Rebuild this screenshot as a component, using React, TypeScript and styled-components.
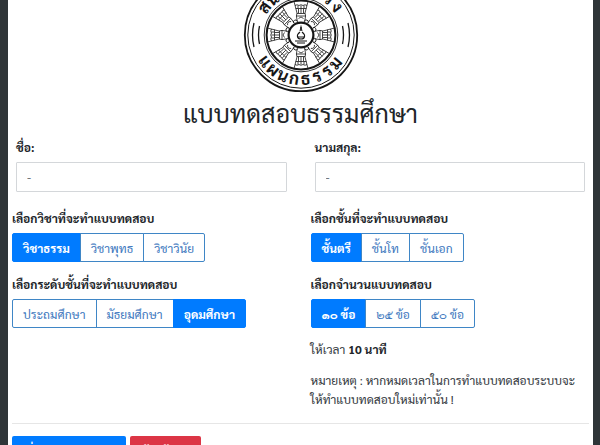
import React, { useState } from "react";
import styled, { createGlobalStyle } from "styled-components";

const Global = createGlobalStyle`
  * { box-sizing: border-box; }
  html, body { margin: 0; height: 100%; overflow: hidden; }
  body {
    background: #2f3538;
    color: #212529;
    font-family: Sarabun, "Noto Sans", sans-serif;
    font-size: 12px;
    line-height: 20px;
  }
  #root { height: 100%; }
  button, input { font: inherit; }
`;

const Page = styled.div`
  min-height: 100%;
  padding: 0 7px 0 8px;
  display: flex;
`;

const Panel = styled.main`
  flex: 1;
  min-width: 0;
  padding: 0 4px;
  background: #fff;
`;

const Header = styled.header`
  display: flex;
  flex-direction: column;
  align-items: center;
`;

const Emblem = styled.svg`
  display: block;
  width: 116px;
  height: 93px;
`;

const Title = styled.h1`
  margin: 4px 0 8px;
  font-size: 25px;
  font-weight: 400;
  line-height: 32px;
`;

const Columns = styled.div`
  display: grid;
  grid-template-columns: 1fr 1fr;
  column-gap: 22px;
  padding-right: 2px;
`;

const Field = styled.div`
  display: flex;
  flex-direction: column;
  gap: 5px;
  padding: 0 2px 0 4px;
`;

const FieldLabel = styled.label`
  font-weight: 700;
`;

const TextBox = styled.input`
  width: 100%;
  height: 30px;
  padding: 0 10px;
  border: 1px solid #d4d7da;
  border-radius: 1px;
  color: #495057;
  background: #fff;
`;

const Group = styled.fieldset`
  min-width: 0;
  margin: 0;
  padding: 0;
  border: 0;
`;

const Legend = styled.legend`
  padding: 0;
  margin-bottom: 5px;
  font-weight: 700;
`;

const Stack = styled.div`
  display: flex;
  flex-direction: column;
  gap: 12px;
  padding-top: 16px;
`;

const Segments = styled.div`
  display: flex;
`;

const Segment = styled.button<{ $active: boolean }>`
  height: 29px;
  padding: 0 10px;
  border: 1px solid ${(p) => (p.$active ? "#007bff" : "#3f86c6")};
  background: ${(p) => (p.$active ? "#007bff" : "#fff")};
  color: ${(p) => (p.$active ? "#fff" : "#4078be")};
  font-weight: ${(p) => (p.$active ? 700 : 400)};
  white-space: nowrap;
  cursor: pointer;
  & + & { margin-left: -1px; }
  &:first-child { border-radius: 2px 0 0 2px; }
  &:last-child { border-radius: 0 2px 2px 0; }
`;

const Note = styled.p`
  margin: 0;
  line-height: 19px;
  color: #34393e;
  strong { color: #212529; }
`;

const Divider = styled.hr`
  margin: 14px 0 12px;
  border: 0;
  border-top: 1px solid #e6e6e6;
`;

const Actions = styled.div`
  display: flex;
  gap: 4px;
`;

const Action = styled.button<{ $tone: string }>`
  height: 30px;
  padding: 0 11px;
  border: 0;
  border-radius: 2px;
  background: ${(p) => p.$tone};
  color: #fff;
  font-weight: 700;
  cursor: pointer;
`;

const topLetters = [..."สนามหลวง"];
const bottomLetters = [..."แผนกธรรม"];
const spokes = [0, 45, 90, 135, 180, 225, 270, 315];

function Logo() {
  return (
    <Emblem viewBox="-58 -35 116 93" role="img" aria-label="สนามหลวง แผนกธรรม">
      <g fill="none" stroke="#161616">
        <circle r="56.2" strokeWidth="1.8" />
        <circle r="53.2" strokeWidth="1" />
        <circle r="36.8" strokeWidth="0.9" />
        <circle r="34.4" strokeWidth="2" />
        {[0, 180].map((a) => (
          <g key={a} transform={`rotate(${a})`} strokeWidth="1.3">
            <path d="M41.500 -9Q43.500 0 41.500 9M47 -12Q50 0 47 12" />
          </g>
        ))}
        {spokes.map((a) => (
          <g key={a} transform={`rotate(${a})`} strokeWidth="0.8">
            <path d="M-3.600 -13L-4.600 -19L-4 -22L-7 -33.600M3.600 -13L4.600 -19L4 -22L7 -33.600" />
            <path d="M-4.600 -19H4.600M-4 -21.500H4M-5.300 -26.500H5.300M-6 -29.500Q-4 -31 -2 -29.500Q0 -31 2 -29.500Q4 -31 6 -29.500" />
            <path d="M-2.500 -22V-26M0 -21.500V-26.500M2.500 -22V-26M-3 -26.500V-29.500M0 -26.500V-29.500M3 -26.500V-29.500" />
            <path d="M-2.500 -16.500Q0 -19.500 2.500 -16.500" />
          </g>
        ))}
        {spokes.map((a) => (
          <path key={a} d="M-2 -14Q-2 -16.500 0 -16Q2 -16.500 2 -14" transform={`rotate(${a + 22})`} strokeWidth="0.8" />
        ))}
        <circle r="12.400" fill="#fff" strokeWidth="2.200" />
        <path d="M0 -9.500V-4M-1 -4L0 -8L1 -4" strokeWidth="0.9" />
        <path d="M-1 -3C-5 0 -4 4 0 4S5 0 1 -3" strokeWidth="1.200" />
        <path d="M-3 2H3M-6 6H6M-4 8H4" strokeWidth="1.200" />
      </g>
      <g fill="#161616" fontSize="17" fontWeight="700" textAnchor="middle">
        {topLetters.map((c, i) => (
          <text key={i} y="-40" transform={`rotate(${-53 + i * 15})`}>{c}</text>
        ))}
        {bottomLetters.map((c, i) => (
          <text key={i} y="50" transform={`rotate(${54 - i * 15})`}>{c}</text>
        ))}
      </g>
    </Emblem>
  );
}

function Choice({ label, options, initial }: { label: string; options: string[]; initial: number }) {
  const [selected, setSelected] = useState(initial);
  return (
    <Group>
      <Legend>{label}</Legend>
      <Segments>
        {options.map((o, i) => (
          <Segment key={o} type="button" $active={i === selected} aria-pressed={i === selected} onClick={() => setSelected(i)}>
            {o}
          </Segment>
        ))}
      </Segments>
    </Group>
  );
}

export default function App() {
  return (
    <>
      <Global />
      <Page>
        <Panel>
          <Header>
            <Logo />
            <Title>แบบทดสอบธรรมศึกษา</Title>
          </Header>
          <Columns>
            <Field>
              <FieldLabel htmlFor="first">ชื่อ:</FieldLabel>
              <TextBox id="first" defaultValue="-" />
            </Field>
            <Field>
              <FieldLabel htmlFor="last">นามสกุล:</FieldLabel>
              <TextBox id="last" defaultValue="-" />
            </Field>
            <Stack>
              <Choice label="เลือกวิชาที่จะทำแบบทดสอบ" options={["วิชาธรรม", "วิชาพุทธ", "วิชาวินัย"]} initial={0} />
              <Choice label="เลือกระดับชั้นที่จะทำแบบทดสอบ" options={["ประถมศึกษา", "มัธยมศึกษา", "อุดมศึกษา"]} initial={2} />
            </Stack>
            <Stack>
              <Choice label="เลือกชั้นที่จะทำแบบทดสอบ" options={["ชั้นตรี", "ชั้นโท", "ชั้นเอก"]} initial={0} />
              <Choice label="เลือกจำนวนแบบทดสอบ" options={["๑๐ ข้อ", "๒๕ ข้อ", "๕๐ ข้อ"]} initial={0} />
              <Note>ให้เวลา <strong>10 นาที</strong></Note>
              <Note>หมายเหตุ : หากหมดเวลาในการทำแบบทดสอบระบบจะ<wbr />ให้ทำแบบทดสอบใหม่เท่านั้น !</Note>
            </Stack>
          </Columns>
          <Divider />
          <Actions>
            <Action type="button" $tone="#007bff">เริ่มทำแบบทดสอบ</Action>
            <Action type="button" $tone="#dc3545">ล้างข้อมูล</Action>
          </Actions>
        </Panel>
      </Page>
    </>
  );
}
